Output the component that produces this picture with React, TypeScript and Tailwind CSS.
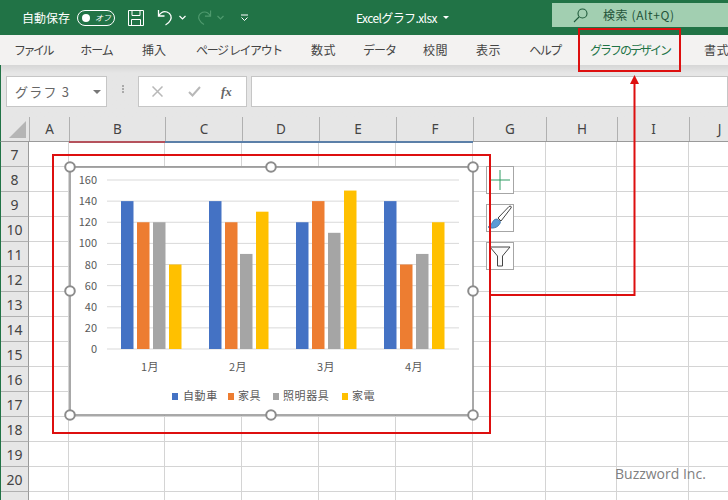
import React from "react";

const jp = "font-['Noto_Sans_CJK_JP','Noto_Sans',sans-serif]";

const columns = [
  { name: "A", w: "w-[40px]" },
  { name: "B", w: "w-[96px]" },
  { name: "C", w: "w-[77px]" },
  { name: "D", w: "w-[77px]" },
  { name: "E", w: "w-[77px]" },
  { name: "F", w: "w-[77px]" },
  { name: "G", w: "w-[73px]" },
  { name: "H", w: "w-[71px]" },
  { name: "I", w: "w-[72px]" },
  { name: "J", w: "w-[60px]" },
];
const rows = [7, 8, 9, 10, 11, 12, 13, 14, 15, 16, 17, 18, 19, 20, 21];

const tabs = [
  { t: "ファイル", w: "w-[66px]", k: "tracking-[-2.5px]" },
  { t: "ホーム", w: "w-[61px]", k: "tracking-[-1px]" },
  { t: "挿入", w: "w-[54px]", k: "" },
  { t: "ページ レイアウト", w: "w-[116px]", k: "tracking-[-1.4px]" },
  { t: "数式", w: "w-[53px]", k: "tracking-[0.5px]" },
  { t: "データ", w: "w-[59px]", k: "tracking-[-1px]" },
  { t: "校閲", w: "w-[53px]", k: "tracking-[0.5px]" },
  { t: "表示", w: "w-[53px]", k: "tracking-[0.5px]" },
  { t: "ヘルプ", w: "w-[60px]", k: "tracking-[-1.5px]" },
  { t: "グラフのデザイン", w: "w-[110px]", k: "tracking-[-2px]", active: true },
  { t: "書式", w: "w-[63px]", k: "tracking-[0.5px]" },
];

const series = [
  { c: "#4472c4", x: [121, 209, 296, 384], v: [140, 140, 120, 140] },
  { c: "#ed7d31", x: [137, 225, 312, 400], v: [120, 120, 140, 80] },
  { c: "#a5a5a5", x: [153, 240, 328, 416], v: [120, 90, 110, 90] },
  { c: "#ffc000", x: [169, 256, 344, 432], v: [80, 130, 150, 120] },
];
const ticks = [160, 140, 120, 100, 80, 60, 40, 20, 0];
const y0 = 349;
const scale = (349 - 180) / 160;
const handles: [number, number][] = [
  [70, 167], [271, 167], [473, 167], [70, 291], [473, 291], [70, 415], [271, 415], [473, 415],
];

function Chart() {
  return (
    <svg
      className={`absolute left-[70px] top-[167px] w-[403px] h-[248px] overflow-visible ${jp}`}
      viewBox="70 167 403 248"
    >
      <rect x="70" y="167" width="403" height="248" fill="#fff" stroke="#8c8c8c" strokeWidth="1.5" />
      {ticks.map((t) => (
        <g key={t}>
          <line x1="107" x2="459" y1={y0 - t * scale} y2={y0 - t * scale} stroke="#d9d9d9" strokeWidth="1" />
          <text x="97" y={y0 - t * scale + 4} textAnchor="end" fontSize="11" fill="#595959">{t}</text>
        </g>
      ))}
      {series.map((s) =>
        s.x.map((x, i) => (
          <rect key={s.c + i} x={x} y={y0 - s.v[i] * scale} width="12.5" height={s.v[i] * scale} fill={s.c} />
        ))
      )}
      {[["1月", 150], ["2月", 238], ["3月", 326], ["4月", 414]].map(([m, x]) => (
        <text key={m} x={x} y="371" textAnchor="middle" fontSize="11" letterSpacing="0.5" fill="#595959">{m}</text>
      ))}
      <rect x="172" y="393" width="6" height="7" fill="#4472c4" />
      <text x="183" y="400" fontSize="11" letterSpacing="0.6" fill="#595959">自動車</text>
      <rect x="228" y="393" width="6" height="7" fill="#ed7d31" />
      <text x="238" y="400" fontSize="11" letterSpacing="0.6" fill="#595959">家具</text>
      <rect x="273" y="393" width="6" height="7" fill="#a5a5a5" />
      <text x="283" y="400" fontSize="11" letterSpacing="0.6" fill="#595959">照明器具</text>
      <rect x="342" y="393" width="6" height="7" fill="#ffc000" />
      <text x="352" y="400" fontSize="11" letterSpacing="0.6" fill="#595959">家電</text>
      {handles.map(([x, y]) => (
        <circle key={`${x}-${y}`} cx={x} cy={y} r="4.8" fill="#fff" stroke="#8c8c8c" strokeWidth="2" />
      ))}
    </svg>
  );
}

function SideButton({ top, children }: { top: string; children: React.ReactNode }) {
  return (
    <div className={`absolute left-[486px] ${top} w-[28px] h-[28px] bg-white border border-[#a6a6a6] flex items-center justify-center`}>
      {children}
    </div>
  );
}

export default function App() {
  return (
    <div className={`relative w-[728px] h-[500px] overflow-hidden bg-white ${jp}`}>
      {/* title bar */}
      <div className="h-[35px] bg-[#217346] flex items-center text-white pl-[22px]">
        <span className="text-[12px] w-[55px]">自動保存</span>
        <div className="w-[38px] h-[16px] rounded-full border border-white flex items-center pl-[4px] gap-[5px]">
          <span className="w-[8px] h-[8px] rounded-full bg-white" />
          <span className="text-[8px] italic">オフ</span>
        </div>
        <svg className="ml-[13px] w-[16px] h-[16px]" viewBox="0 0 16 16" fill="none" stroke="#fff" strokeWidth="1">
          <path d="M.5.5h15v15H.5zM4 .5v5h8v-5M3.5 15.5v-6h9v6" />
        </svg>
        <svg className="ml-[13px] w-[17px] h-[17px]" viewBox="0 0 17 17" fill="none" stroke="#fff" strokeWidth="1.3">
          <path d="M1.500 1v6h6M1.500 7C4 3 7 2 10 3c4 1.500 5 5 3.500 8-1 2-3 4-5 5" />
        </svg>
        <svg className="ml-[5px] w-[7px] h-[5px]" viewBox="0 0 7 5" fill="none" stroke="#fff" strokeWidth="1.2">
          <path d="M.5 1l3 3 3-3" />
        </svg>
        <svg className="ml-[10px] w-[16px] h-[17px]" viewBox="0 0 17 17" fill="none" stroke="#4f9a6e" strokeWidth="1.2">
          <path d="M15.500 1v6h-6M15.500 7C13 3 10 2 7 3 3 4.500 2 8 3.500 11c1 2 3 4 5 5" />
        </svg>
        <svg className="ml-[5px] w-[7px] h-[5px]" viewBox="0 0 7 5" fill="none" stroke="#4f9a6e" strokeWidth="1.2">
          <path d="M.5 1l3 3 3-3" />
        </svg>
        <svg className="ml-[17px] w-[7px] h-[7px]" viewBox="0 0 7 7" fill="none" stroke="#fff" strokeWidth="1">
          <path d="M0 1h7" />
          <path d="M.5 3.500l3 3 3-3" />
        </svg>
        <div className="ml-[108px] w-[100px] flex items-center gap-[6px] text-[12px] tracking-[-0.6px] whitespace-nowrap">
          <span>Excelグラフ.xlsx</span>
          <span className="w-0 h-0 border-x-[3px] border-x-transparent border-t-[3px] border-t-white" />
        </div>
        <div className="ml-auto w-[176px] h-[24px] mt-[-5px] bg-[#a2cfb1] flex items-center text-[#24543a] text-[12px] tracking-[0.6px] pl-[21px] gap-[15px]">
          <svg className="w-[15px] h-[15px]" viewBox="0 0 15 15" fill="none" stroke="#1f5a3a" strokeWidth="1.100">
            <circle cx="9.500" cy="5.500" r="4.500" />
            <path d="M6 9L1 14" />
          </svg>
          <span>検索 (Alt+Q)</span>
        </div>
      </div>

      {/* ribbon tabs */}
      <div className="h-[30px] bg-[#f3f2f1] flex items-center text-[12px] text-[#444]">
        {tabs.map((t) => (
          <span key={t.t} className={`${t.w} ${t.k} shrink-0 text-center whitespace-nowrap ${t.active ? "text-[#217346]" : ""}`}>
            {t.t}
          </span>
        ))}
      </div>

      {/* formula bar */}
      <div className="h-[52px] bg-gradient-to-b from-[#d6d6d6] to-[#e6e6e6] to-[8px] flex items-start pt-[11px] pl-[5px] border-l border-[#217346]">
        <div className="w-[101px] h-[31px] bg-white border border-[#c6c6c6] flex items-center justify-between pl-[8px] pr-[5px] text-[13px] text-[#666] tracking-[1.2px]">
          <span>グラフ 3</span>
          <span className="w-0 h-0 border-x-[4px] border-x-transparent border-t-[4px] border-t-[#777]" />
        </div>
        <div className="w-[31px] flex flex-col items-center gap-[1px] pt-[9px]">
          <span className="w-[2px] h-[2px] bg-[#aaa]" />
          <span className="w-[2px] h-[2px] bg-[#aaa]" />
          <span className="w-[2px] h-[2px] bg-[#aaa]" />
        </div>
        <div className="w-[109px] h-[31px] bg-white border border-[#c6c6c6] flex items-center text-[#b5b5b5]">
          <svg className="ml-[13px] w-[11px] h-[11px]" viewBox="0 0 11 11" stroke="#b8b8b8" strokeWidth="1.500">
            <path d="M.5.5l10 10M10.500.5l-10 10" />
          </svg>
          <svg className="ml-[25px] w-[13px] h-[11px]" viewBox="0 0 13 11" fill="none" stroke="#b8b8b8" strokeWidth="2">
            <path d="M1 6l3.500 3.500L12 1" />
          </svg>
          <span className="ml-[20px] font-['Liberation_Serif',serif] italic font-bold text-[13px] text-[#666]">fx</span>
        </div>
        <div className="ml-[4px] flex-1 h-[31px] bg-white border border-[#c6c6c6]" />
      </div>

      {/* column headers */}
      <div className="h-[25px] flex bg-[#e6e6e6] border-l border-[#217346] border-b border-b-[#9a9a9a] text-[13.500px] text-[#444] font-['Noto_Sans',sans-serif]">
        <div className="w-[28px] shrink-0 relative">
          <span className="absolute right-[3px] bottom-[3px] w-0 h-0 border-l-[17px] border-l-transparent border-b-[17px] border-b-[#b5b5b5]" />
        </div>
        {columns.map((c) => (
          <div key={c.name} className={`${c.w} shrink-0 flex items-center justify-center border-l border-[#b0b0b0]`}>
            {c.name}
          </div>
        ))}
      </div>

      {/* sheet */}
      <div className="flex flex-col border-l border-[#217346] font-['Noto_Sans',sans-serif]">
        {rows.map((r) => (
          <div key={r} className="h-[25px] shrink-0 flex">
            <div className="w-[28px] shrink-0 bg-[#e6e6e6] border-b border-[#b0b0b0] border-r border-r-[#9a9a9a] flex items-center justify-center text-[14px] text-[#444]">
              {r}
            </div>
            {columns.map((c) => (
              <div key={c.name} className={`${c.w} shrink-0 border-b border-r border-[#d4d4d4]`} />
            ))}
          </div>
        ))}
      </div>

      {/* selection markers on headers */}
      <div className="absolute left-[69px] top-[141px] w-[96px] h-[2px] bg-[#b5525c]" />
      <div className="absolute left-[165px] top-[141px] w-[308px] h-[2px] bg-[#5b7fa8]" />

      <Chart />

      <SideButton top="top-[166px]">
        <svg className="w-[20px] h-[20px]" viewBox="0 0 20 20" stroke="#2e9b63" strokeWidth="1">
          <path d="M10 0v20M0 10h20" />
        </svg>
      </SideButton>
      <SideButton top="top-[204px]">
        <svg className="w-[26px] h-[26px]" viewBox="0 0 26 26">
          <path d="M24 3c1-1.500-.5-2.500-2-1.500L11 13l3 3z" fill="#fff" stroke="#444" strokeWidth="1" />
          <path d="M10 14c-3 0-4 2-5 4s-2 3-4 4c3 2 8 1 10-1s3-4 2-5z" fill="#5b9bd5" stroke="#3b6ea5" strokeWidth="0.8" />
        </svg>
      </SideButton>
      <SideButton top="top-[242px]">
        <svg className="w-[22px] h-[22px]" viewBox="0 0 22 22" fill="#fafafa" stroke="#444" strokeWidth="1">
          <path d="M1 2h20l-7.500 9v10h-5V11z" />
        </svg>
      </SideButton>

      {/* red annotations */}
      <div className="absolute left-[578px] top-[28px] w-[103px] h-[44px] border-[2px] border-[#dd0f0f]" />
      <div className="absolute left-[52px] top-[154px] w-[439px] h-[280px] border-[2px] border-[#dd0f0f]" />
      <svg className="absolute left-0 top-0 w-[728px] h-[500px] pointer-events-none" viewBox="0 0 728 500" fill="none">
        <path d="M491 295H634.500V82" stroke="#dd0f0f" strokeWidth="2" />
        <path d="M634.500 75l4.500 9h-9z" fill="#dd0f0f" />
      </svg>

      <span className="absolute left-[615px] top-[463px] text-[14px] font-medium text-[#808080] font-['Open_Sans',sans-serif]">
        Buzzword Inc.
      </span>
    </div>
  );
}
